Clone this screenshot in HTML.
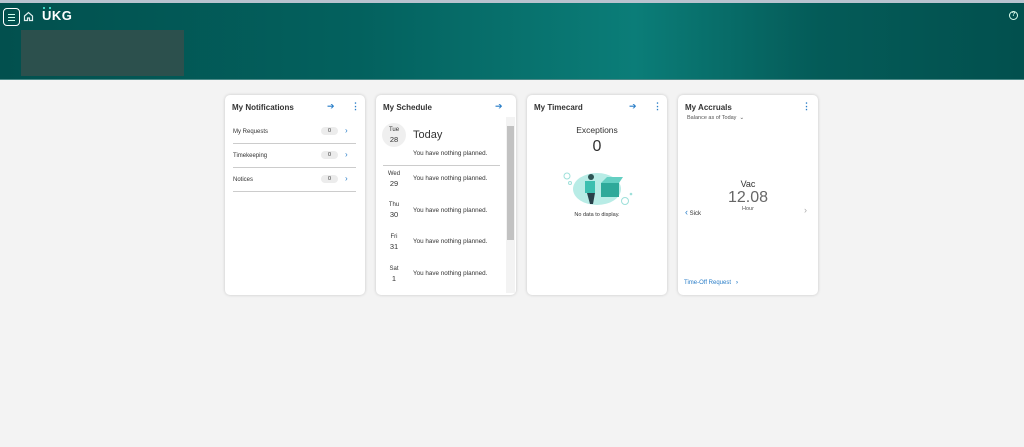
<!DOCTYPE html>
<html><head><style>
*{box-sizing:border-box;margin:0;padding:0}
body{width:1024px;height:447px;background:#f3f3f3;font-family:"Liberation Sans",sans-serif;position:relative;overflow:hidden;color:#333}
.top{position:absolute;left:0;top:0;width:1024px;height:3px;background:#b9c3cf}
.hdr{position:absolute;left:0;top:3px;width:1024px;height:77px;background:linear-gradient(90deg,#02504e 0%,#03615e 35%,#0b7d78 62%,#045b58 80%,#02504e 100%);border-bottom:1px solid #4d8a88}
.menu{position:absolute;left:3px;top:5px;width:17px;height:18px;border:1.3px solid #fff;border-radius:4px}
.menu i{position:absolute;left:4px;width:7px;height:1.3px;background:#cfe}
.blk{position:absolute;left:21px;top:27px;width:163px;height:46px;background:#2c504d}
.card{position:absolute;top:95px;width:140px;height:200px;background:#fff;border-radius:5px;box-shadow:0 0 3px rgba(0,0,0,.18)}
.t{position:absolute;left:7px;top:8px;font-size:8px;font-weight:bold;color:#333}
.blue{color:#2a7ec8}
.row{position:absolute;left:8px;width:123px;height:24px;border-bottom:1px solid #ccc;font-size:6px}
.row span{position:absolute;left:0;top:9px}
.row b{position:absolute;left:88px;top:7px;width:17px;height:8px;background:#ececec;border-radius:4px;font-weight:normal;text-align:center;font-size:5.5px;line-height:8px}
.row em{position:absolute;left:112px;top:6px;color:#2a7ec8;font-style:normal;font-size:8px}
.d{position:absolute;left:8px;width:20px;text-align:center;font-size:6px;line-height:9px}
.d b{font-weight:normal;font-size:7.5px}
.np{position:absolute;left:37px;font-size:6.3px}
</style></head><body>
<div class="top"></div>
<div class="hdr">
 <div class="menu"><i style="top:4.5px"></i><i style="top:7.5px"></i><i style="top:10.5px"></i></div>
 <svg style="position:absolute;left:23px;top:8px" width="11" height="11" viewBox="0 0 11 11"><path d="M1.5 5 L5.5 1.5 L9.5 5 V9.5 H6.5 V7 H4.5 V9.5 H1.5Z" fill="none" stroke="#dfeeee" stroke-width="1.2"/></svg>
 <div style="position:absolute;left:42px;top:5px;color:#fff;font-weight:bold;font-size:13px;letter-spacing:.5px">UKG</div>
 <div style="position:absolute;left:43px;top:4px;width:2px;height:2px;background:#3ad4c4"></div><div style="position:absolute;left:49px;top:4px;width:2px;height:2px;background:#3ad4c4"></div>
 <div class="blk"></div>
 <div style="position:absolute;left:1009px;top:8px;width:9px;height:9px;border:1.2px solid #dfe;border-radius:50%;color:#dfe;font-size:6px;text-align:center;line-height:7px;font-weight:bold">?</div>
</div>

<div class="card" style="left:225px">
 <div class="t">My Notifications</div>
 <div class="blue" style="position:absolute;left:102px;top:6px;font-size:9px">➔</div>
 <div class="blue" style="position:absolute;left:126px;top:6px;font-size:9px;font-weight:bold">⋮</div>
 <div class="row" style="top:25px"><span>My Requests</span><b>0</b><em>›</em></div>
 <div class="row" style="top:49px"><span>Timekeeping</span><b>0</b><em>›</em></div>
 <div class="row" style="top:73px"><span>Notices</span><b>0</b><em>›</em></div>
</div>

<div class="card" style="left:376px">
 <div class="t">My Schedule</div>
 <div class="blue" style="position:absolute;left:119px;top:6px;font-size:9px">➔</div>
 <div style="position:absolute;left:130px;top:22px;width:9px;height:176px;background:#f3f3f3"></div>
 <div style="position:absolute;left:131px;top:31px;width:7px;height:114px;background:#c2c2c2"></div>
 <div style="position:absolute;left:6px;top:28px;width:24px;height:24px;border-radius:50%;background:#efefef"></div>
 <div class="d" style="top:31px"><b style="font-size:6px">Tue</b><br><b>28</b></div>
 <div style="position:absolute;left:37px;top:34px;font-size:11px">Today</div>
 <div class="np" style="top:55px">You have nothing planned.</div>
 <div style="position:absolute;left:7px;top:70px;width:117px;height:1px;background:#ccc"></div>
 <div class="d" style="top:75px">Wed<br><b>29</b></div><div class="np" style="top:80px">You have nothing planned.</div>
 <div class="d" style="top:106px">Thu<br><b>30</b></div><div class="np" style="top:112px">You have nothing planned.</div>
 <div class="d" style="top:138px">Fri<br><b>31</b></div><div class="np" style="top:143px">You have nothing planned.</div>
 <div class="d" style="top:170px">Sat<br><b>1</b></div><div class="np" style="top:175px">You have nothing planned.</div>
</div>

<div class="card" style="left:527px">
 <div class="t">My Timecard</div>
 <div class="blue" style="position:absolute;left:102px;top:6px;font-size:9px">➔</div>
 <div class="blue" style="position:absolute;left:126px;top:6px;font-size:9px;font-weight:bold">⋮</div>
 <div style="position:absolute;left:0;width:140px;top:30px;text-align:center;font-size:8.5px">Exceptions</div>
 <div style="position:absolute;left:0;width:140px;top:43px;text-align:center;font-size:16px">0</div>
 <svg style="position:absolute;left:34px;top:72px" width="72" height="40" viewBox="0 0 72 40">
  <ellipse cx="36" cy="22" rx="24" ry="16" fill="#b8ece6"/>
  <circle cx="6" cy="9" r="3" fill="none" stroke="#9ee0da"/><circle cx="64" cy="34" r="3.5" fill="none" stroke="#9ee0da"/><circle cx="9" cy="16" r="1.5" fill="none" stroke="#9ee0da"/><circle cx="70" cy="27" r="1.3" fill="#9ee0da"/>
  <rect x="40" y="16" width="18" height="14" fill="#2fa99a"/><path d="M40 16 L46 10 L62 10 L58 16Z" fill="#64cfc2"/>
  <rect x="24" y="14" width="10" height="12" fill="#3cbfb0"/><circle cx="30" cy="10" r="3" fill="#2d5454"/>
  <path d="M26 26 L34 26 L32 37 L29 37Z" fill="#28414a"/>
 </svg>
 <div style="position:absolute;left:0;width:140px;top:117px;text-align:center;font-size:5.5px">No data to display.</div>
</div>

<div class="card" style="left:678px">
 <div class="t">My Accruals</div>
 <div class="blue" style="position:absolute;left:124px;top:6px;font-size:9px;font-weight:bold">⋮</div>
 <div style="position:absolute;left:9px;top:20px;font-size:5.5px;color:#555">Balance as of Today &nbsp;⌄</div>
 <div style="position:absolute;left:0;width:140px;top:84px;text-align:center;font-size:9px">Vac</div>
 <div style="position:absolute;left:0;width:140px;top:94px;text-align:center;font-size:16px;color:#666">12.08</div>
 <div style="position:absolute;left:0;width:140px;top:111px;text-align:center;font-size:5.5px;color:#555">Hour</div>
 <div style="position:absolute;left:7px;top:112px;font-size:6px"><span class="blue" style="font-size:9px">‹</span> Sick</div>
 <div style="position:absolute;left:126px;top:110px;font-size:9px;color:#aaa">›</div>
 <div class="blue" style="position:absolute;left:6px;top:185px;font-size:6px">Time-Off Request &nbsp;&nbsp;<b>›</b></div>
</div>
</body></html>
